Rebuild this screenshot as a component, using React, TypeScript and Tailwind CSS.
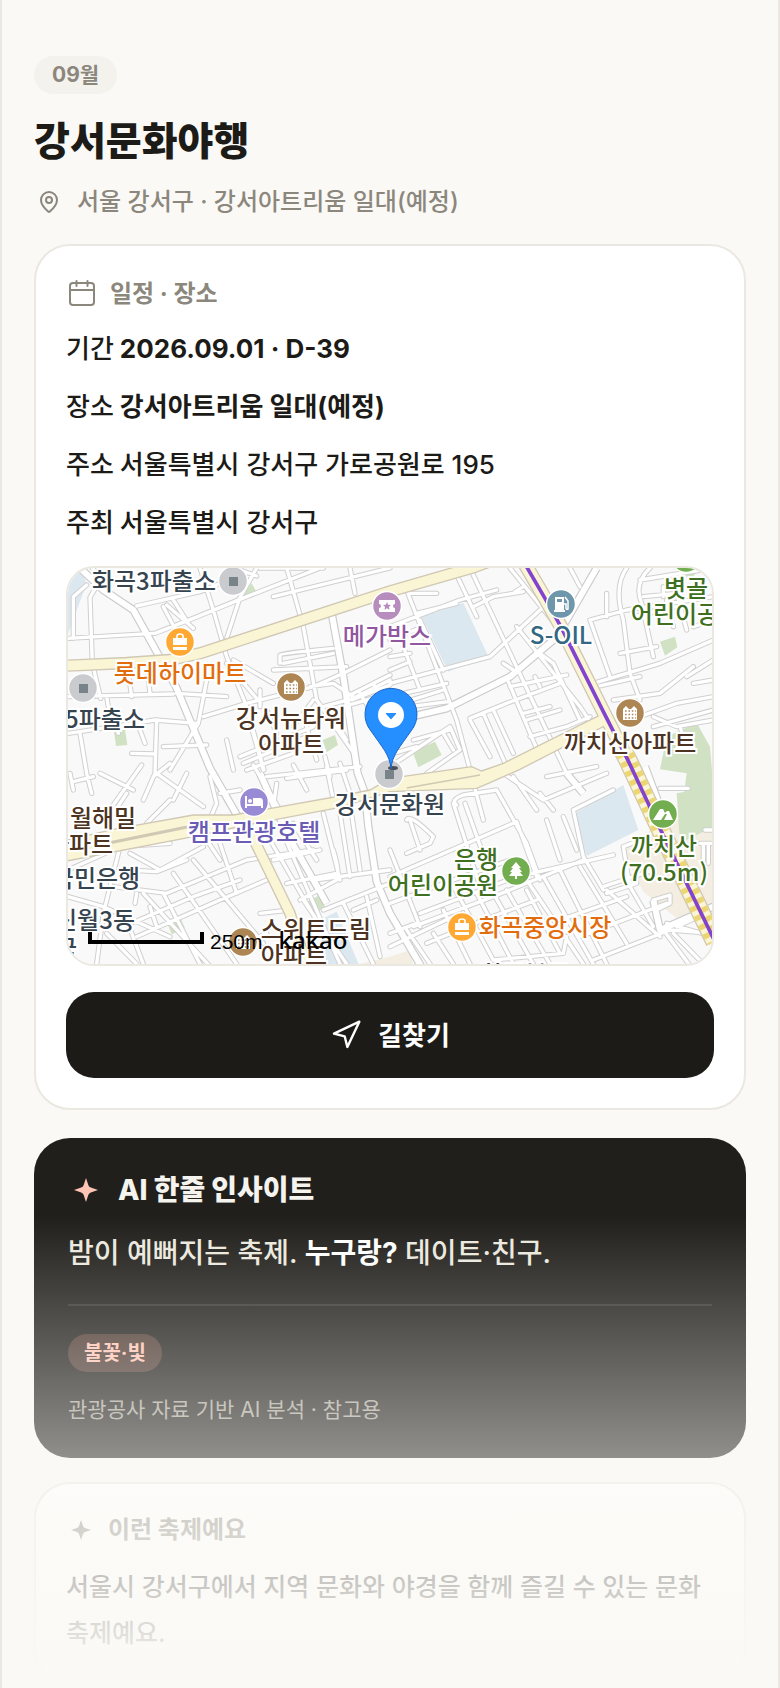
import type { ReactNode } from "react";
import { MapPin, Navigation } from "lucide-react";

type Poi = {
  x: number;
  y: number;
  color: string;
  kind: "square" | "bag" | "building" | "ticket" | "fuel" | "bed" | "mountain" | "tree";
};

type MapLabel = {
  x: number;
  y: number;
  lines: string[];
  color: string;
  align?: string;
};

const SLATE = "text-[#36444f]";
const BROWN = "text-[#4d3322]";
const ORANGE = "text-[#e26d0e]";
const GREEN = "text-[#3f6f20]";

// Points on the 644 x 396 map canvas
const labels: MapLabel[] = [
  { x: 86, y: 12, lines: ["화곡3파출소"], color: SLATE },
  { x: 112, y: 104, lines: ["롯데하이마트"], color: ORANGE },
  { x: 37, y: 150, lines: ["5파출소"], color: SLATE },
  { x: 223, y: 162, lines: ["강서뉴타워", "아파트"], color: BROWN },
  { x: 319, y: 67, lines: ["메가박스"], color: "text-[#9157a0]" },
  { x: 493, y: 66, lines: ["S-OIL"], color: "text-[#336782]" },
  { x: 618, y: 32, lines: ["볏골", "어린이공원"], color: GREEN },
  { x: 562, y: 174, lines: ["까치산아파트"], color: BROWN },
  { x: 322, y: 235, lines: ["강서문화원"], color: SLATE },
  { x: 35, y: 249, lines: ["월해밀"], color: BROWN },
  { x: 12, y: 275, lines: ["아파트"], color: BROWN },
  { x: 28, y: 309, lines: ["국민은행"], color: SLATE },
  { x: 27, y: 351, lines: ["신월3동"], color: SLATE },
  { x: -2, y: 379, lines: ["국"], color: SLATE },
  { x: 186, y: 263, lines: ["캠프관광호텔"], color: "text-[#6a5bb5]" },
  { x: 248, y: 373, lines: ["스위트드림", "아파트"], color: BROWN, align: "text-left" },
  { x: 375, y: 303, lines: ["은행", "어린이공원"], color: GREEN, align: "text-right" },
  { x: 477, y: 358, lines: ["화곡중앙시장"], color: ORANGE },
  { x: 596, y: 290, lines: ["까치산", "(70.5m)"], color: GREEN },
  { x: 457, y: 405, lines: ["화곡본동"], color: SLATE },
];

const pois: Poi[] = [
  { x: 165, y: 13, color: "#c9cbcf", kind: "square" },
  { x: 15, y: 120, color: "#c9cbcf", kind: "square" },
  { x: 321, y: 206, color: "#c9cbcf", kind: "square" },
  { x: 112, y: 74, color: "#ffa834", kind: "bag" },
  { x: 394, y: 359, color: "#ffa834", kind: "bag" },
  { x: 223, y: 119, color: "#ad8654", kind: "building" },
  { x: 562, y: 145, color: "#ad8654", kind: "building" },
  { x: 175, y: 374, color: "#ad8654", kind: "building" },
  { x: 319, y: 38, color: "#b78dbd", kind: "ticket" },
  { x: 493, y: 36, color: "#6f97ab", kind: "fuel" },
  { x: 186, y: 234, color: "#998ad6", kind: "bed" },
  { x: 595, y: 246, color: "#72ae50", kind: "mountain" },
  { x: 448, y: 303, color: "#72ae50", kind: "tree" },
  { x: 618, y: -10, color: "#72ae50", kind: "tree" },
];

// Street geometry is drawn on a canvas three times as fine as the map
const lanes = [
  "M97 24 130 60M80 75 40 110V235M110 78 90 112 97 310 122 415",
  "M24 235 280 220M230 138 420 95 500 62M285 220 400 175 540 118 780 24",
  "M420 24 460 150 500 290 560 440 612 630M590 24 540 112 500 235",
  "M320 135 400 205M340 120 385 190M310 140 350 215M540 30 590 48",
  "M24 410 340 402M24 520 160 500 285 480 410 490M205 340 215 410M262 330 270 400",
  "M175 520 160 490M140 410 155 500M290 480 285 640 250 720M60 520 80 640 95 700",
  "M215 580 285 582M310 560 440 555M240 510 255 550M440 360 415 490 330 630",
  "M350 400 500 410M430 470 560 430 760 380 860 335 990 270",
  "M500 310 590 415M520 300 640 370M560 450 610 630M600 390 600 440",
  "M660 310V285Q662 280 820 265M670 310 820 280M640 330 860 320",
  "M680 24 730 200 770 420 880 578M600 24 790 24M870 24 885 100",
  "M640 110 990 24M750 380 820 370 880 410M790 440 880 415 990 360",
  "M860 410 990 345M875 420 990 375M850 440 990 400M900 400 930 450M940 370 965 420",
  "M540 590 760 500M550 610 740 530M560 630 700 580M740 500 770 600M795 590 810 650",
  "M620 450 650 520M500 540 520 630M760 420 700 500M830 490 860 540",
  "M30 640 40 690M40 665 100 650M120 640 220 690M245 615 160 735M290 640 430 740",
  "M380 640 340 720M280 650 330 610M330 720 260 790M200 700 160 760 90 780",
  "M450 650 470 730 455 765M480 700 540 690M620 650 900 620M650 670 640 740",
  "M580 615 660 750M680 655 860 630M700 615 740 690M800 620 820 720M840 610 870 700",
  "M24 930 180 860 330 850M180 860 130 1060 110 1212M210 880 300 930 430 860",
  "M200 930 290 935 380 900M160 980 320 1000 560 900 760 870M190 1100 400 1010 540 960",
  "M230 1130 480 1020 620 960M250 1000 460 1230M340 940 530 1212M400 900 610 1150",
  "M480 850 530 1000M440 840 480 900M230 1000 225 1030M270 1040 290 1100",
  "M310 1000 420 1212M200 1080 250 1212M140 1120 230 1212M24 1010 130 1040 330 1130",
  "M630 840 780 1100M660 800 840 1212M700 790 770 900M790 760 840 960M840 760 870 950",
  "M640 900 780 870M680 970 830 940Q840 940 820 870M720 1020 830 960M760 960 990 930",
  "M730 1020 860 1212M790 1050 990 970M850 1030 940 1212M880 1050 950 1020",
  "M870 730 900 930M920 1010 960 1190M600 1060 690 1050M560 1150 620 1120",
  "M1040 90 1190 480 1270 780M1080 180 1150 330M1180 24 1250 170M1050 100 1130 100",
  "M990 200 1200 120 1310 90M990 240 1090 200M1070 160 1190 130M1230 24 1520 640",
  "M990 370 1290 290 1440 150M1100 60 1200 24M1240 140 1300 110M1300 110 1390 95M1365 95 1390 80",
  "M990 290 1050 280M990 330 1050 305M1030 260 1080 390M990 410 1160 370M990 440 1150 390",
  "M1050 440 1165 425M1330 310 1360 330M1425 350 1440 380M1350 380 1520 345M1345 365 1440 590",
  "M1230 475 1340 430 1500 370M1270 460 1340 620M1300 450 1360 580M1230 480 1290 590",
  "M1390 460 1470 440M1400 480 1500 450M1410 530 1520 500 1590 470M1430 580 1530 550",
  "M990 620 1170 500 1200 570 1100 640M1060 540 1170 510M1000 580 1070 560M1150 520 1180 570",
  "M1350 24 1500 210M1370 200 1560 440 1600 500M1440 280 1480 310 1560 480",
  "M1590 180 1700 150 1960 110M1590 180 1650 350M1600 370 1800 310 1960 240",
  "M1700 24Q1660 80 1690 180L1710 340 1740 420M1770 24Q1720 70 1745 130L1780 290",
  "M1740 60 1960 24M1750 110 1850 100 1880 210M1720 170 1850 140M1680 280 1790 260",
  "M1820 120 1840 200M1900 200 1960 180M1900 370 1960 360M1880 350 1960 300M1530 24 1560 80",
  "M1740 470 1850 430 1960 410M1780 500 1960 450M1610 380 1740 350M1800 400 1900 320",
  "M1660 420 1800 400M1780 470 1850 500 1960 480M1860 500 1880 560M1640 100 1640 170M1810 80V110",
  "M1190 735Q1170 720 1210 705L1310 690M1180 730 1260 980M1215 730 1290 940",
  "M990 950 1370 785M990 1030 1180 960 1350 900M1310 690 1400 850 1440 960M1370 785 1430 950",
  "M1330 640 1450 720 1640 640M1440 700 1480 750M1360 650 1430 750M1460 650 1610 620",
  "M1540 750 1660 690M1540 750 1570 890 1630 990M1460 780 1500 900M1510 770 1550 870",
  "M1080 1060 1370 950 1660 885M1060 1100 1300 1010 1570 900M1100 1150 1270 1080 1430 1020",
  "M990 870 1080 1100M1040 780Q1050 760 1120 830L1110 850 1040 880M1050 780 1080 870",
  "M1170 960 1300 1200M1250 1000 1360 1212M1300 1000 1420 1212M1340 990 1470 1212",
  "M1450 950 1600 1212M1500 930 1640 1212M1560 920 1700 1150M1400 990 1500 1180",
  "M1120 1120 1180 1212M1040 1110 1110 1212M1150 1050 1230 1212M1400 960 1570 1212",
  "M1500 1080 1700 1010M1560 1130 1820 1030M1600 1200 1830 1110 1960 1120M1640 990 1800 1130",
  "M1300 1200 1510 1180 1520 1130M990 1160 1200 1060M1630 980 1780 930M1640 1000 1730 970",
  "M1690 860 1710 980 1780 1100M1690 860 1740 840M1780 1020 1830 1005V1030L1790 1050",
  "M1920 850H1960M1930 850V920M1945 850V910M1820 1090 1960 1130M1840 1120 1930 1212",
  "M1800 685H1885M1935 810H1960M1810 1110 1900 1230M1850 1100 1940 1060M990 1120 1070 1090",
];

const streets = [
  "M60 24 130 90 220 150 290 275 350 385 450 625 545 790",
  "M815 160 850 350 893 640 915 700 925 800 950 965 990 1060 1085 1222",
  "M600 640 680 820 800 1030",
  "M990 485 1160 445 1350 350 1480 240 1520 180 1610 24",
  "M1520 640 1570 700",
  "M1755 620 1800 740",
  "M1780 1020 1800 1110 1960 1040",
];

const water = [
  "M24 24H60L80 70 24 222Z",
  "M1085 170 1210 128 1283 285 1165 335Z",
  "M1535 765 1690 675 1735 810 1580 888Z",
  "M790 1075 830 1055 900 1222H780Z",
];

const parks = [
  "M540 112 575 70 592 100Z",
  "M162 515 195 508 202 555 168 558Z",
  "M788 540 825 525 834 555 800 577Z",
  "M1058 575 1125 545 1145 585 1075 622Z",
  "M1800 245 1845 230 1852 262 1815 287Z",
  "M1820 530 1910 488 1950 560 1970 800 1860 790 1880 640 1800 628Z",
  "M1850 700 1960 680V800L1860 850Z",
  "M320 1085 360 1070 375 1105 335 1123Z",
  "M740 1025 780 1005 795 1040 760 1065Z",
  "M1850 24H1920L1890 60Z",
];

const sand = [
  "M1860 760 1960 795V1040L1850 1075 1750 995 1680 860 1740 830Z",
  "M900 1212 990 1190 1050 1170 1060 1222H900Z",
];

const yellowTop = "M0 318 200 309 330 300 420 280 990 94 1240 22 1300 0";
const yellowDown = "M575 825 690 1060 745 1230";
const subwayLine = "M1388 0 1455 115 1500 195 1550 295 1630 455 1706 605 1802 810 1965 1145";
const yellowWide =
  "M0 845 160 808 400 765 520 765 840 708 930 690 990 655 1235 620 1265 633 1330 610 1630 460 1645 492 1380 628 1290 668 1250 685 990 695 840 742 560 795 400 830 0 907Z";

const MapBase = () => (
  <svg viewBox="24 24 1932 1188" className="block size-full" fill="none" aria-hidden="true">
    <rect x="0" y="0" width="2000" height="1240" fill="#f9f9f9" />
    <path d={sand.join("")} fill="#f4ede1" />
    <path d={parks.join("")} fill="#d0e2c3" />
    <path d={water.join("")} fill="#dce8f0" />
    <path d={lanes.join("")} stroke="#d0d0d0" strokeWidth="16" strokeLinecap="round" strokeLinejoin="round" />
    <path d={streets.join("")} stroke="#cbcbcb" strokeWidth="25" strokeLinejoin="round" />
    <path d={lanes.join("")} stroke="#fff" strokeWidth="10" strokeLinecap="round" strokeLinejoin="round" />
    <path d={streets.join("")} stroke="#fff" strokeWidth="18" strokeLinejoin="round" />
    <path d={yellowTop} stroke="#d0c8b4" strokeWidth="37" />
    <path d={yellowDown} stroke="#d0c8b4" strokeWidth="35" />
    <path d={subwayLine} stroke="#d0c8b4" strokeWidth="44" />
    <path d="M1690 573 1706 605 1802 810 1965 1145" stroke="#d0c8b4" strokeWidth="58" />
    <path d={yellowWide} fill="#faf5d4" stroke="#d0c8b4" strokeWidth="4" />
    <path d={yellowTop} stroke="#faf5d4" strokeWidth="29" />
    <path d={yellowDown} stroke="#faf5d4" strokeWidth="27" />
    <path d={subwayLine} stroke="#faf5d4" strokeWidth="36" />
    <path d="M150 848 400 797" stroke="#d0c8b4" strokeWidth="9" />
    <path d="M1040 684 1260 645" stroke="#d0c8b4" strokeWidth="4" />
    <path d="M1690 573 1706 605 1802 810 1965 1145" stroke="#faf5d4" strokeWidth="50" />
    <path d="M1677 579 1693 611 1789 816 1952 1151" stroke="#ecd672" strokeWidth="22" strokeDasharray="16 14" />
    <path
      d="M1703 567 1719 599 1815 804 1978 1139"
      stroke="#ecd672"
      strokeWidth="22"
      strokeDasharray="16 14"
      strokeDashoffset="15"
    />
    <path d={subwayLine} stroke="#8443cf" strokeWidth="11" />
  </svg>
);

const glyphs: Record<Poi["kind"], ReactNode> = {
  square: <path d="M-4-4H5V5H-4Z" fill="#78848a" />,
  bag: (
    <>
      <path d="M-7-4H7V3H-7ZM-7 5H7V8H-7Z" fill="#fff" />
      <path d="M-3-4V-6Q-3-8 0-8T3-6V-4" stroke="#fff" strokeWidth="1.6" />
    </>
  ),
  building: (
    <>
      <path d="M-7 7V-4L-4-7-1-4 1-4 4-7 7-4V7Z" fill="#fff" />
      <path d="M-5-2H6M-5 1.500H6M-5 5H6" stroke="#ad8654" strokeWidth="1.600" strokeDasharray="1.600 1.800" />
    </>
  ),
  ticket: (
    <>
      <path d="M-8-6H8V-2A2 2 0 0 0 8 2V6H-8V2A2 2 0 0 0-8-2Z" fill="#fff" />
      <path d="M0-4 1.200-1.200 4-1 1.900.9 2.600 3.800 0 2.200-2.600 3.800-1.900.9-4-1-1.200-1.200Z" fill="#b78dbd" />
    </>
  ),
  fuel: (
    <>
      <path d="M-6-7H3V6H4V8H-7V6H-6Z" fill="#fff" />
      <path d="M-4-5H1V-2H-4Z" fill="#6f97ab" />
      <path d="M3 0H5V4Q5 6 7 5V-3L4-7" stroke="#fff" strokeWidth="1.500" />
    </>
  ),
  bed: (
    <>
      <path d="M-8-6V6M8 6V0M-8 3H8" stroke="#fff" strokeWidth="2" />
      <circle cx="-4" cy="-1" r="2" fill="#fff" />
      <path d="M-1-4H6Q9-4 9 0V3H-1Z" fill="#fff" />
    </>
  ),
  mountain: <path d="M-10 6-3-5 0-5 2-1 4-3 6-3 10 6H1L4 0 2 0-2 6Z" fill="#fff" />,
  tree: <path d="M0-9 5-3H3L6 1H4L7 5H1V8H-1V5H-7L-4 1H-6L-3-3H-5Z" fill="#fff" />,
};

const MapPoi = ({ poi }: { poi: Poi }) => (
  <g transform={`translate(${poi.x} ${poi.y})`}>
    <circle r="14.500" fill={poi.color} stroke="#fff" strokeWidth="1.500" />
    {glyphs[poi.kind]}
  </g>
);

const FestivalMap = () => (
  <div className="relative h-[400px] overflow-hidden rounded-[28px] border-2 border-[#ebe8e1] bg-[#f9f9f9]">
    <div className="absolute top-0 left-1/2 h-[396px] w-[644px] -translate-x-1/2">
      <MapBase />
      <svg viewBox="0 0 644 396" className="absolute inset-0 size-full" fill="none" aria-hidden="true">
        {pois.map((poi) => (
          <MapPoi key={`${poi.x}-${poi.y}`} poi={poi} />
        ))}
      </svg>
      {labels.map(({ x, y, lines, color, align }) => (
        <div
          key={lines.join("") + y}
          style={{ left: x, top: y }}
          className={`absolute -translate-x-1/2 -translate-y-1/2 font-['Noto_Sans_CJK_KR',sans-serif] text-2xl leading-[26px] font-medium whitespace-nowrap [paint-order:stroke_fill] [-webkit-text-stroke:4px_white] ${color} ${align ?? "text-center"}`}
        >
          {lines.map((line) => (
            <div key={line}>{line}</div>
          ))}
        </div>
      ))}
      <svg viewBox="0 0 56 84" className="absolute top-[119px] left-[295px] h-[84px] w-14" fill="none" aria-hidden="true">
        <ellipse cx="30" cy="81" rx="5" ry="2" fill="#4b5054" />
        <path
          d="M28 82C27 68 19 60 8 44A26 26 0 1 1 48 44C37 60 29 68 28 82Z"
          fill="#258fff"
          stroke="#1a66c9"
          strokeWidth="1"
        />
        <circle cx="28" cy="28" r="13" fill="#fff" />
        <path d="M23 26H33V27L28 32.500 23 27Z" fill="#258fff" />
      </svg>
      <div className="absolute bottom-2 left-5 flex items-end text-black">
        <div className="mb-3 h-3 w-[116px] border-4 border-t-0 border-black" />
        <span className="ml-[6px] font-['Liberation_Sans',sans-serif] text-[21px] leading-7">250m</span>
        <span className="ml-4 font-['Noto_Sans',sans-serif] text-2xl leading-8 font-medium">kakao</span>
      </div>
    </div>
  </div>
);

const Spark = ({ className }: { className: string }) => (
  <svg viewBox="0 0 24 24" className={className} fill="currentColor" aria-hidden="true">
    <path d="M12 0 14.400 7.200Q15 9 16.800 9.600L24 12 16.800 14.400Q15 15 14.400 16.800L12 24 9.600 16.800Q9 15 7.200 14.400L0 12 7.200 9.600Q9 9 9.600 7.200Z" />
  </svg>
);

const CalendarIcon = () => (
  <svg
    viewBox="0 0 32 32"
    className="size-8"
    fill="none"
    stroke="currentColor"
    strokeWidth="2"
    strokeLinecap="round"
    aria-hidden="true"
  >
    <rect x="4" y="5" width="24" height="22" rx="3" />
    <path d="M4 12H28M10.500 3V8M21.500 3V8" />
  </svg>
);

const details = [
  { term: "기간", value: "2026.09.01 · D-39", strong: true },
  { term: "장소", value: "강서아트리움 일대(예정)", strong: true },
  { term: "주소", value: "서울특별시 강서구 가로공원로 195", strong: false },
  { term: "주최", value: "서울특별시 강서구", strong: false },
];

const ScheduleCard = () => (
  <section className="rounded-[36px] border-2 border-[#ebe8e1] bg-white p-[30px]">
    <h2 className="flex h-9 items-center gap-3 text-2xl font-bold text-[#8c877d]">
      <CalendarIcon />
      일정 · 장소
    </h2>
    <dl className="mt-2 text-[26px] leading-[58px] font-medium">
      {details.map(({ term, value, strong }) => (
        <div key={term} className="flex gap-[6px]">
          <dt>{term}</dt>
          <dd className={strong ? "font-bold" : ""}>{value}</dd>
        </div>
      ))}
    </dl>
    <div className="mt-[14px]">
      <FestivalMap />
    </div>
    <button
      type="button"
      className="mt-[26px] flex h-[86px] w-full items-center justify-center gap-4 rounded-[28px] bg-[#1c1b17] text-[26px] font-bold text-white"
    >
      <Navigation className="size-8" strokeWidth={1.8} />
      길찾기
    </button>
  </section>
);

const InsightCard = () => (
  <section className="mt-7 rounded-[36px] bg-[#201f1b] px-[34px] py-8">
    <h2 className="flex h-10 items-center gap-[14px] text-[28px] font-extrabold text-[#f5f3ee]">
      <span className="flex w-9 justify-center">
        <Spark className="size-6 text-[#ffc4b3]" />
      </span>
      AI 한줄 인사이트
    </h2>
    <p className="mt-5 text-[28px] leading-[46px] font-medium text-[#ebe8de]">
      밤이 예뻐지는 축제. <strong className="font-bold text-white">누구랑?</strong> 데이트·친구.
    </p>
    <div className="mt-7 border-t-2 border-white/10 pt-7">
      <span className="flex h-[38px] w-fit items-center rounded-full bg-[#ff9e8c]/20 px-4 text-xl font-bold text-[#ffc4b3]">
        불꽃·빛
      </span>
      <p className="mt-[22px] text-[21px] leading-8 text-[#a8a49a]">관광공사 자료 기반 AI 분석 · 참고용</p>
    </div>
  </section>
);

const AboutCard = () => (
  <section className="mt-6 rounded-[36px] border-2 border-[#ebe8e1] bg-white px-[30px] pt-7 pb-[26px]">
    <h2 className="flex h-9 items-center gap-3 text-2xl font-bold text-[#8c877d]">
      <span className="flex w-[30px] justify-center">
        <Spark className="size-5" />
      </span>
      이런 축제예요
    </h2>
    <p className="mt-4 text-[25px] leading-[46px] font-medium">
      서울시 강서구에서 지역 문화와 야경을 함께 즐길 수 있는 문화축제예요.
    </p>
  </section>
);

export default function App() {
  return (
    <main className="relative min-h-screen border-x-2 border-[#ebe8e1] bg-[#faf9f5] px-8 pt-14 font-['Inter','Noto_Sans_CJK_KR',sans-serif] text-[#1c1b17]">
      <header>
        <span className="flex h-[38px] w-fit items-center rounded-full bg-[#f3f2ed] px-[18px] text-[21px] font-bold text-[#8c877d]">
          09월
        </span>
        <h1 className="mt-5 text-[39px] leading-[54px] font-extrabold">강서문화야행</h1>
        <p className="mt-4 mb-6 flex h-9 items-center gap-4 text-2xl font-medium text-[#8c877d]">
          <MapPin className="ml-[3px] size-6" strokeWidth={2} />
          서울 강서구 · 강서아트리움 일대(예정)
        </p>
      </header>
      <ScheduleCard />
      <InsightCard />
      <AboutCard />
      <div className="pointer-events-none absolute inset-x-0 bottom-0 h-[28%] bg-linear-to-b from-[#faf9f5]/0 to-[#faf9f5]" />
    </main>
  );
}
